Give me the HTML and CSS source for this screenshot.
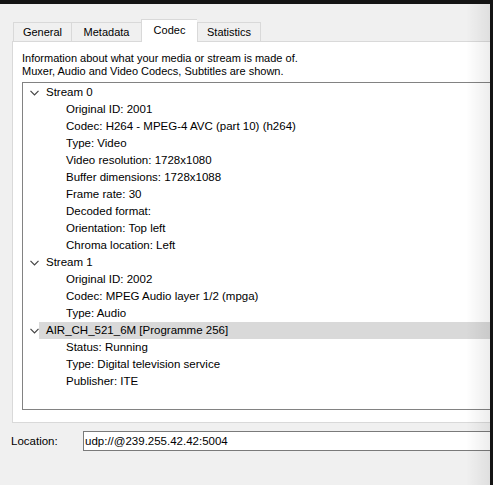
FILE: index.html
```html
<!DOCTYPE html>
<html>
<head>
<meta charset="utf-8">
<link rel="stylesheet" href="styles.css">
</head>
<body>
<div class="topbar"></div>
<div class="frame">
  <div class="main">
    <div class="tabs">
      <div class="tab t-general">General</div>
      <div class="tab t-meta">Metadata</div>
      <div class="tab t-codec active">Codec</div>
      <div class="tab t-stats">Statistics</div>
    </div>
    <div class="panel">
      <p class="info">Information about what your media or stream is made of.<br>Muxer, Audio and Video Codecs, Subtitles are shown.</p>
      <div class="tree">
        <div class="row top"><svg class="chev" width="9" height="6" viewBox="0 0 9 6"><polyline points="0.5,0.8 4.5,4.8 8.5,0.8" fill="none" stroke="#444" stroke-width="1.2"/></svg><span>Stream 0</span></div>
        <div class="row child">Original ID: 2001</div>
        <div class="row child">Codec: H264 - MPEG-4 AVC (part 10) (h264)</div>
        <div class="row child">Type: Video</div>
        <div class="row child">Video resolution: 1728x1080</div>
        <div class="row child">Buffer dimensions: 1728x1088</div>
        <div class="row child">Frame rate: 30</div>
        <div class="row child">Decoded format:</div>
        <div class="row child">Orientation: Top left</div>
        <div class="row child">Chroma location: Left</div>
        <div class="row top"><svg class="chev" width="9" height="6" viewBox="0 0 9 6"><polyline points="0.5,0.8 4.5,4.8 8.5,0.8" fill="none" stroke="#444" stroke-width="1.2"/></svg><span>Stream 1</span></div>
        <div class="row child">Original ID: 2002</div>
        <div class="row child">Codec: MPEG Audio layer 1/2 (mpga)</div>
        <div class="row child">Type: Audio</div>
        <div class="row top selected"><svg class="chev" width="9" height="6" viewBox="0 0 9 6"><polyline points="0.5,0.8 4.5,4.8 8.5,0.8" fill="none" stroke="#444" stroke-width="1.2"/></svg><span>AIR_CH_521_6M [Programme 256]</span></div>
        <div class="row child">Status: Running</div>
        <div class="row child">Type: Digital television service</div>
        <div class="row child">Publisher: ITE</div>
      </div>
    </div>
    <div class="location">
      <span class="loc-label">Location:</span>
      <div class="loc-input">udp://@239.255.42.42:5004</div>
    </div>
    <div class="shade"></div>
  </div>
  <div class="edge"></div>
</div>
</body>
</html>
```
FILE: styles.css
```css
html, body {
  margin: 0;
  padding: 0;
}
body {
  width: 493px;
  height: 485px;
  overflow: hidden;
  background: #f0f0f0;
  font-family: "Liberation Sans", Arial, sans-serif;
  font-size: 11.5px;
  color: #000;
}
.topbar {
  height: 4px;
  background: #141414;
}
.frame {
  display: flex;
  height: 481px;
}
.main {
  position: relative;
  width: 490px;
  overflow: hidden;
  background: #f0f0f0;
}
.edge {
  width: 3px;
  background: #141414;
}
.tabs {
  display: flex;
  align-items: flex-end;
  margin: 15px 0 0 13px;
  height: 22px;
  font-size: 11px;
}
.tab {
  box-sizing: border-box;
  height: 19px;
  border: 1px solid #d9d9d9;
  border-bottom: none;
  border-right: none;
  background: #f0f0f0;
  text-align: center;
  line-height: 18px;
}
.tab.t-stats { border-right: 1px solid #d9d9d9; }
.t-general { width: 58px; }
.t-meta { width: 70px; }
.t-codec { width: 56px; }
.t-stats { width: 64px; }
.tab.active {
  background: #fff;
  line-height: 20px;
  border-right: none;
  position: relative;
  z-index: 1;
  margin-bottom: -1px;
  height: 23px;
}
.panel {
  box-sizing: border-box;
  margin-left: 12px;
  width: 500px;
  height: 382px;
  background: #fff;
  border: 1px solid #d9d9d9;
  padding: 10px 0 0 9px;
}
.info {
  margin: 0;
  font-size: 11px;
  line-height: 13px;
}
.tree {
  box-sizing: border-box;
  margin-top: 4px;
  height: 328px;
  width: 500px;
  border: 1px solid #828282;
  padding-top: 1px;
}
.row {
  height: 17px;
  line-height: 17px;
  white-space: nowrap;
}
.row.top {
  display: flex;
  align-items: center;
  padding-left: 7px;
}
.row.top span {
  padding-left: 7px;
  padding-right: 3px;
}
.row.top.selected span {
  flex: 1;
  background: #d9d9d9;
}
.chev {
  display: block;
}
.row.child {
  padding-left: 43px;
}
.location {
  display: flex;
  align-items: center;
  margin-top: 8px;
  padding-left: 11px;
}
.loc-label {
  width: 72px;
}
.loc-input {
  box-sizing: border-box;
  flex: 1;
  height: 20px;
  margin-right: -20px;
  background: #fff;
  border: 1px solid #7a7a7a;
  line-height: 18px;
  padding-left: 1px;
}
.shade {
  position: absolute;
  top: 0;
  right: 0;
  width: 24px;
  height: 100%;
  background: linear-gradient(to right, rgba(0,0,0,0), rgba(0,0,0,0.07));
  pointer-events: none;
}
```
